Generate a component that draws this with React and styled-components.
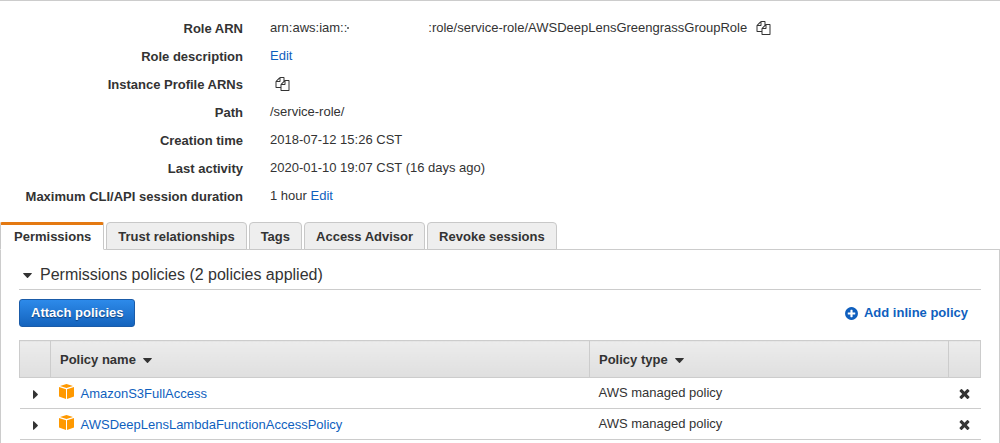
import React from 'react'
import styled, { createGlobalStyle, ThemeProvider } from 'styled-components'

const theme = {
  text: '#333',
  link: '#0f5fbe',
  border: '#ccc',
  orange: '#e47911'
}

const GlobalStyle = createGlobalStyle`
  * {
    box-sizing: border-box;
  }

  body {
    margin: 0;
    background: white;
    color: ${theme.text};
    font-family: "Liberation Sans", Arial, sans-serif;
    font-size: 13px;
    line-height: 16px;
  }
`

const Page = styled.main`
  border-top: 1px solid ${props => props.theme.border};
`

const Summary = styled.dl`
  display: grid;
  grid-template-columns: 243px 1fr;
  grid-auto-rows: 28px;
  column-gap: 27px;
  align-items: center;
  margin: 0;
  padding: 13px 0 12px;

  dt {
    padding-top: 2px;
    text-align: right;
    font-weight: bold;
  }

  dd {
    display: flex;
    align-items: center;
    margin: 0;
    white-space: pre;
  }
`

const Link = styled.a`
  color: ${props => props.theme.link};
  text-decoration: none;
`

const AccountId = styled.span`
  display: flex;
  align-items: center;
  width: 81px;

  &::before {
    content: '';
    width: 2px;
    height: 2px;
    background: #777;
  }
`

const IconButton = styled.button`
  display: inline-flex;
  margin: 0;
  margin-left: ${props => props.$indent || 0}px;
  padding: 0;
  border: 0;
  background: none;
  color: ${props => props.theme.text};
`

const Tabs = styled.div`
  display: flex;
  gap: 2px;
  margin-bottom: -1px;
`

const Tab = styled.button`
  height: 28px;
  padding: 2px 11px 0;
  border: 1px solid #c8c8c8;
  border-radius: 4px 4px 0 0;
  background: #eee;
  color: ${props => props.theme.text};
  font: bold 13px/16px "Liberation Sans", Arial, sans-serif;

  &[aria-selected='true'] {
    padding: 0 12px 0 13px;
    border-top: 3px solid ${props => props.theme.orange};
    border-bottom-color: white;
    border-radius: 2px 2px 0 0;
    background: white;
  }
`

const Panel = styled.section`
  padding: 15px 18px 20px;
  border: 1px solid ${props => props.theme.border};
  border-bottom: 0;
`

const PanelTitle = styled.h2`
  display: flex;
  align-items: center;
  gap: 8px;
  margin: 0;
  padding: 0 0 4px 4px;
  border-bottom: 1px solid ${props => props.theme.border};
  font-size: 16px;
  font-weight: normal;
  line-height: 20px;
`

const Actions = styled.div`
  display: flex;
  align-items: center;
  justify-content: space-between;
  padding: 9px 13px 13px 0;
`

const PrimaryButton = styled.button`
  height: 28px;
  padding: 0 11px;
  border: 1px solid #1a5ba8;
  border-radius: 3px;
  background: linear-gradient(#2d8aea, #1463bd);
  color: white;
  font: bold 13px/16px "Liberation Sans", Arial, sans-serif;
  text-shadow: 0 1px 1px #0c3f7c;
`

const InlineLink = styled(Link)`
  display: flex;
  align-items: center;
  gap: 5px;
  font-weight: bold;
`

const PolicyTable = styled.table`
  width: 100%;
  table-layout: fixed;
  border-collapse: collapse;

  th {
    height: 37px;
    padding: 2px 9px 0;
    border: 1px solid ${props => props.theme.border};
    background: linear-gradient(#ececec, #dfdfdf);
    text-align: left;
  }

  td {
    height: 31px;
    padding: 0 9px;
    border-bottom: 1px solid ${props => props.theme.border};
  }
`

const Col = styled.col`
  width: ${props => props.$width || 'auto'};
`

const PolicyName = styled.div`
  display: flex;
  gap: 7px;
  margin-left: -1px;

  ${Link} {
    padding-top: 2px;
  }
`

const Centered = styled.div`
  display: flex;
  justify-content: center;
  padding-top: ${props => props.$top || 0}px;
`

const SortLabel = styled.span`
  display: flex;
  align-items: center;
  gap: 7px;
`

const CopyIcon = () => (
  <svg width='15' height='14' viewBox='0 0 1792 1792' fill='currentColor' aria-hidden='true'>
    <path d='M1696 384q40 0 68 28t28 68v1216q0 40-28 68t-68 28h-960q-40 0-68-28t-28-68v-288h-544q-40 0-68-28t-28-68v-672q0-40 20-88t48-76l408-408q28-28 76-48t88-20h416q40 0 68 28t28 68v328q68-40 128-40h416zm-544 213l-299 299h299v-299zm-640-384l-299 299h299v-299zm196 647l316-316v-416h-384v416q0 40-28 68t-68 28h-416v640h512v-256q0-40 20-88t48-76zm956 804v-1152h-384v416q0 40-28 68t-68 28h-416v640h896z' />
  </svg>
)

const PlusIcon = () => (
  <svg width='15' height='15' viewBox='0 0 1792 1792' fill='currentColor' aria-hidden='true'>
    <path d='M1344 960v-128q0-26-19-45t-45-19h-256v-256q0-26-19-45t-45-19h-128q-26 0-45 19t-19 45v256h-256q-26 0-45 19t-19 45v128q0 26 19 45t45 19h256v256q0 26 19 45t45 19h128q26 0 45-19t19-45v-256h256q26 0 45-19t19-45zm320-64q0 209-103 385.5t-279.5 279.5-385.5 103-385.5-103-279.5-279.5-103-385.5 103-385.5 279.5-279.5 385.5-103 385.5 103 279.5 279.5 103 385.5z' />
  </svg>
)

const RemoveIcon = () => (
  <svg width='15' height='15' viewBox='0 0 1792 1792' fill='currentColor' aria-hidden='true'>
    <path d='M1490 1322q0 40-28 68l-136 136q-28 28-68 28t-68-28l-294-294-294 294q-28 28-68 28t-68-28l-136-136q-28-28-28-68t28-68l294-294-294-294q-28-28-28-68t28-68l136-136q28-28 68-28t68 28l294 294 294-294q28-28 68-28t68 28l136 136q28 28 28 68t-28 68l-294 294 294 294q28 28 28 68z' />
  </svg>
)

const CaretDown = () => (
  <svg width='9' height='5' viewBox='0 0 9 5' fill='currentColor' aria-hidden='true'>
    <path d='M0.5 0h8q.6.3.2.8L5 4.7q-.5.4-1 0L.3.8Q-.1.3.5 0z' />
  </svg>
)

const CaretRight = () => (
  <svg width='5' height='9' viewBox='0 0 5 9' fill='currentColor' aria-hidden='true'>
    <path d='M0 .5v8q.3.6.8.2L4.7 5q.4-.5 0-1L.8.3Q.3-.1 0 .5z' />
  </svg>
)

const BoxIcon = () => (
  <svg width='15' height='15' viewBox='0 0 15 15' fill='#f90' aria-hidden='true'>
    <path d='M7.5 0L14 1.9 7.5 4.1 1 1.9z' />
    <path d='M0 3l7 2.2V15L0 12.6z' />
    <path d='M15 3L8 5.2V15l7-2.4z' />
  </svg>
)

const tabs = ['Permissions', 'Trust relationships', 'Tags', 'Access Advisor', 'Revoke sessions']

const policies = [
  { name: 'AmazonS3FullAccess', type: 'AWS managed policy' },
  { name: 'AWSDeepLensLambdaFunctionAccessPolicy', type: 'AWS managed policy' }
]

const RoleSummary = () => (
  <Summary>
    <dt>Role ARN</dt>
    <dd>
      arn:aws:iam::
      <AccountId />
      :role/service-role/AWSDeepLensGreengrassGroupRole
      <IconButton $indent={9} aria-label='Copy role ARN'><CopyIcon /></IconButton>
    </dd>
    <dt>Role description</dt>
    <dd><Link href='#description'>Edit</Link></dd>
    <dt>Instance Profile ARNs</dt>
    <dd><IconButton $indent={5} aria-label='Copy instance profile ARNs'><CopyIcon /></IconButton></dd>
    <dt>Path</dt>
    <dd>/service-role/</dd>
    <dt>Creation time</dt>
    <dd>2018-07-12 15:26 CST</dd>
    <dt>Last activity</dt>
    <dd>2020-01-10 19:07 CST (16 days ago)</dd>
    <dt>Maximum CLI/API session duration</dt>
    <dd>{'1 hour '}<Link href='#duration'>Edit</Link></dd>
  </Summary>
)

const Policies = () => (
  <PolicyTable>
    <colgroup>
      <Col $width='31px' />
      <Col />
      <Col $width='359px' />
      <Col $width='32px' />
    </colgroup>
    <thead>
      <tr>
        <th aria-label='Expand' />
        <th><SortLabel>Policy name <CaretDown /></SortLabel></th>
        <th><SortLabel>Policy type <CaretDown /></SortLabel></th>
        <th aria-label='Detach' />
      </tr>
    </thead>
    <tbody>
      {policies.map(policy => (
        <tr key={policy.name}>
          <td>
            <Centered $top={2}>
              <IconButton aria-label={`Expand ${policy.name}`}><CaretRight /></IconButton>
            </Centered>
          </td>
          <td>
            <PolicyName>
              <BoxIcon />
              <Link href={`#${policy.name}`}>{policy.name}</Link>
            </PolicyName>
          </td>
          <td>{policy.type}</td>
          <td>
            <Centered>
              <IconButton aria-label={`Detach ${policy.name}`}><RemoveIcon /></IconButton>
            </Centered>
          </td>
        </tr>
      ))}
    </tbody>
  </PolicyTable>
)

const App = () => (
  <ThemeProvider theme={theme}>
    <GlobalStyle />
    <Page>
      <RoleSummary />
      <Tabs role='tablist'>
        {tabs.map((tab, i) => (
          <Tab key={tab} role='tab' aria-selected={i === 0}>{tab}</Tab>
        ))}
      </Tabs>
      <Panel role='tabpanel'>
        <PanelTitle><CaretDown /> Permissions policies (2 policies applied)</PanelTitle>
        <Actions>
          <PrimaryButton>Attach policies</PrimaryButton>
          <InlineLink href='#inline'><PlusIcon /> Add inline policy</InlineLink>
        </Actions>
        <Policies />
      </Panel>
    </Page>
  </ThemeProvider>
)

export default App
